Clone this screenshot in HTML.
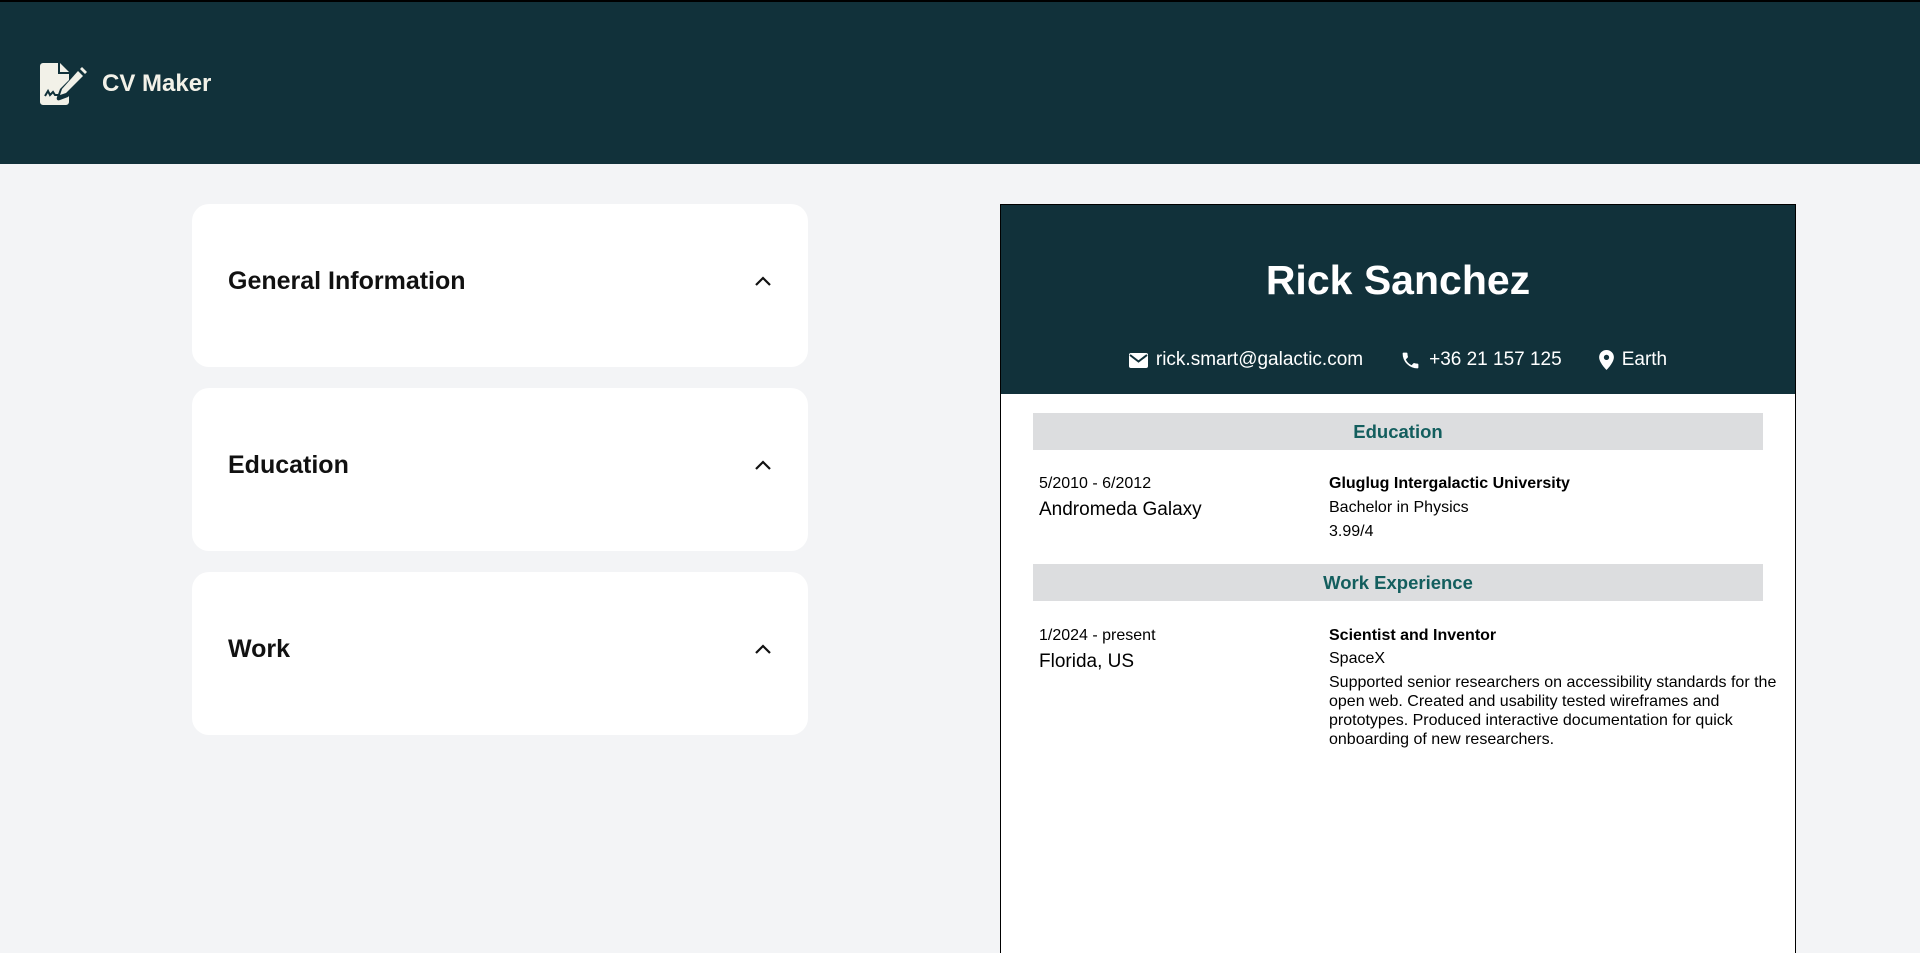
<!DOCTYPE html>
<html><head><meta charset="utf-8"><style>
*{margin:0;padding:0;box-sizing:border-box}
html,body{width:1920px;height:953px;overflow:hidden}
body{background:#f3f4f6;font-family:"Liberation Sans",Arial,sans-serif;position:relative}
.hdr{position:absolute;left:0;top:0;width:1920px;height:164px;background:#11313a;border-top:2px solid #000}
.logo{position:absolute;left:40px;top:61px}
.brand{position:absolute;left:102px;top:68px;color:#f2f1e8;font-weight:bold;font-size:24px}
.card{position:absolute;left:192px;width:616px;height:163px;background:#fff;border-radius:17px}
.card h2{position:absolute;left:36px;top:63px;font-size:25px;font-weight:bold;color:#111}
.card svg{position:absolute;left:563px;top:72px}
.cv{position:absolute;left:1000px;top:204px;width:796px;height:749px;background:#fff;border:1px solid #000;border-bottom:none}
.cvh{height:189px;background:#11313a;color:#fff;text-align:center}
.cvh h1{padding-top:52px;font-size:41px;font-weight:bold}
.ct{position:absolute;top:144px;left:0;width:100%;display:flex;justify-content:center;gap:37px;font-size:19px}
.ct span{display:flex;align-items:center;gap:8px}
.bar{position:absolute;left:32px;width:730px;height:37px;background:#dcdddf;color:#135e5e;font-weight:bold;font-size:18.5px;text-align:center;line-height:37px}
.l{position:absolute;left:38px}
.r{position:absolute;left:328px;width:460px}
.s{font-size:16px;line-height:24px}
.m{font-size:19px;line-height:28px}
</style></head><body>
<div class="hdr">
<svg class="logo" width="47" height="42" viewBox="0 0 47 42"><path d="M0 3a3 3 0 0 1 3-3h15v11h11v6l-9 9-3 8c-1 3 1 4 3 3l8-3 1-1v6a3 3 0 0 1-3 3H3a3 3 0 0 1-3-3z" fill="#f2f1e8"/><path d="M20 0l9 9h-9z" fill="#f2f1e8"/><path d="M38 8l5 5-17 17-6 2 2-6z" fill="#f2f1e8"/><path d="M40 6l2-2 5 5-2 2z" fill="#f2f1e8"/><path d="M5 33l3-5 2 4 3-3 2 3h4" stroke="#11313a" stroke-width="2" fill="none"/></svg>
<div class="brand">CV Maker</div>
</div>
<div class="card" style="top:204px"><h2>General Information</h2><svg width="16" height="10"><path d="M1 9l7-7 7 7" stroke="#111" stroke-width="2.2" fill="none"/></svg></div>
<div class="card" style="top:388px"><h2>Education</h2><svg width="16" height="10"><path d="M1 9l7-7 7 7" stroke="#111" stroke-width="2.2" fill="none"/></svg></div>
<div class="card" style="top:572px"><h2>Work</h2><svg width="16" height="10"><path d="M1 9l7-7 7 7" stroke="#111" stroke-width="2.2" fill="none"/></svg></div>
<div class="cv">
<div class="cvh"><h1>Rick Sanchez</h1>
<div class="ct">
<span><svg width="19" height="15" viewBox="0 0 19 15"><rect x="0" y="0" width="19" height="15" rx="2" fill="#fff"/><path d="M1 2l8.5 6.5L18 2" stroke="#11313a" stroke-width="2" fill="none"/></svg>rick.smart@galactic.com</span>
<span><svg width="21" height="21" viewBox="0 0 24 24"><path d="M6.6 10.8a15 15 0 0 0 6.6 6.6l2.2-2.2a1 1 0 0 1 1-.25c1.1.37 2.3.57 3.6.57a1 1 0 0 1 1 1V20a1 1 0 0 1-1 1A17 17 0 0 1 3 4a1 1 0 0 1 1-1h3.5a1 1 0 0 1 1 1c0 1.3.2 2.5.57 3.6a1 1 0 0 1-.25 1z" fill="#fff"/></svg>+36 21 157 125</span>
<span><svg width="15" height="20" viewBox="0 0 14 19"><path d="M7 0a7 7 0 0 1 7 7c0 5-7 12-7 12S0 12 0 7a7 7 0 0 1 7-7z" fill="#fff"/><circle cx="7" cy="7" r="2.5" fill="#11313a"/></svg>Earth</span>
</div></div>
<div class="bar" style="top:208px">Education</div>
<div class="l s" style="top:267px">5/2010 - 6/2012</div>
<div class="l m" style="top:291px">Andromeda Galaxy</div>
<div class="r s" style="top:267px"><b>Gluglug Intergalactic University</b><br>Bachelor in Physics<br>3.99/4</div>
<div class="bar" style="top:359px">Work Experience</div>
<div class="l s" style="top:419px">1/2024 - present</div>
<div class="l m" style="top:443px">Florida, US</div>
<div class="r s" style="top:419px;line-height:23px"><b>Scientist and Inventor</b><br>SpaceX<br><span style="line-height:19px;display:block;margin-top:3px">Supported senior researchers on accessibility standards for the open web. Created and usability tested wireframes and prototypes. Produced interactive documentation for quick onboarding of new researchers.</span></div>
</div>
</body></html>
